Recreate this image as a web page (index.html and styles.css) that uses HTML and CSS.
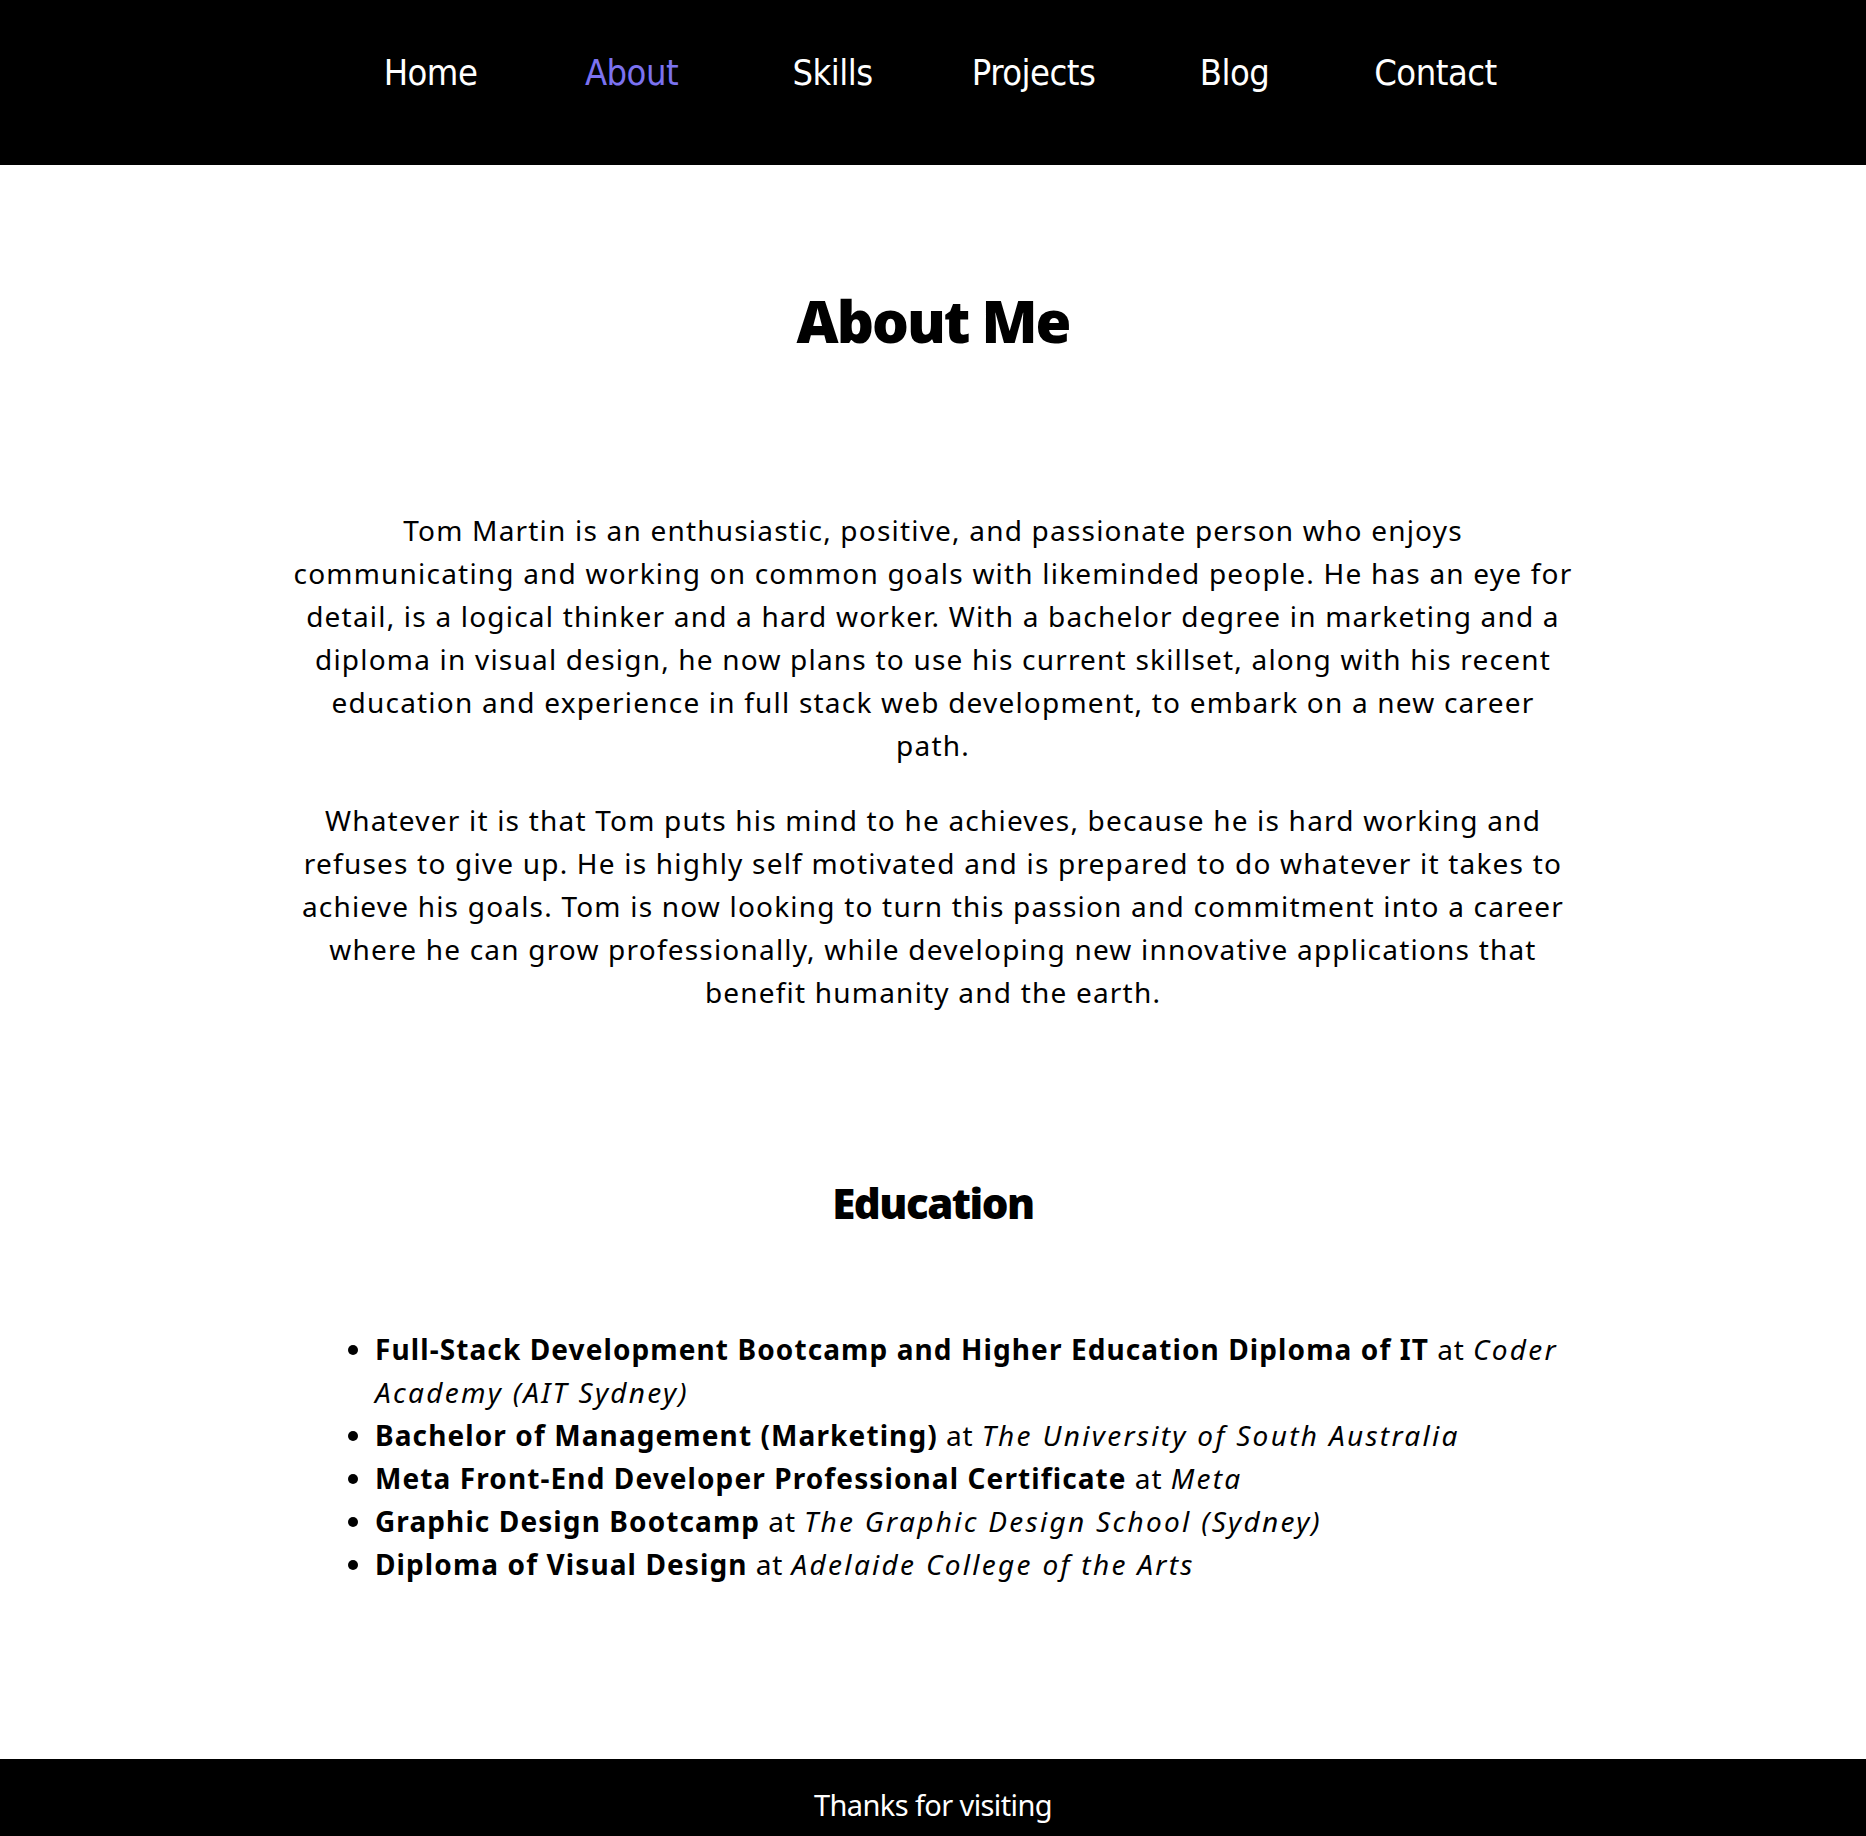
FILE: index.html
```html
<!DOCTYPE html>
<html lang="en">
<head>
<meta charset="utf-8">
<title>About Me</title>
<link rel="stylesheet" href="styles.css">
</head>
<body>
<header class="site-header">
  <nav class="nav">
    <a class="nav-link" href="#">Home</a>
    <a class="nav-link active" href="#">About</a>
    <a class="nav-link" href="#">Skills</a>
    <a class="nav-link" href="#">Projects</a>
    <a class="nav-link" href="#">Blog</a>
    <a class="nav-link" href="#">Contact</a>
  </nav>
</header>
<main class="main">
  <section class="about">
    <h1 class="title">About Me</h1>
    <div class="bio">
      <p>Tom Martin is an enthusiastic, positive, and passionate person who enjoys communicating and working on common goals with likeminded people. He has an eye for detail, is a logical thinker and a hard worker. With a bachelor degree in marketing and a diploma in visual design, he now plans to use his current skillset, along with his recent education and experience in full stack web development, to embark on a new career path.</p>
      <p>Whatever it is that Tom puts his mind to he achieves, because he is hard working and refuses to give up. He is highly self motivated and is prepared to do whatever it takes to achieve his goals. Tom is now looking to turn this passion and commitment into a career where he can grow professionally, while developing new innovative applications that benefit humanity and the earth.</p>
    </div>
  </section>
  <section class="education">
    <h2 class="subtitle">Education</h2>
    <ul class="edu-list">
      <li><strong>Full-Stack Development Bootcamp and Higher Education Diploma of IT</strong> at <em>Coder Academy (AIT Sydney)</em></li>
      <li><strong>Bachelor of Management (Marketing)</strong> at <em>The University of South Australia</em></li>
      <li><strong>Meta Front-End Developer Professional Certificate</strong> at <em>Meta</em></li>
      <li><strong>Graphic Design Bootcamp</strong> at <em>The Graphic Design School (Sydney)</em></li>
      <li><strong>Diploma of Visual Design</strong> at <em>Adelaide College of the Arts</em></li>
    </ul>
  </section>
</main>
<footer class="site-footer">
  <p class="footer-text">Thanks for visiting</p>
</footer>
</body>
</html>
```
FILE: styles.css
```css
* { box-sizing: border-box; }
html, body { margin: 0; padding: 0; }
body {
  background: #fff;
  color: #000;
  font-family: "Noto Sans", "Open Sans", sans-serif;
}
.site-header {
  background: #000;
  height: 165px;
  display: flex;
  align-items: center;
  justify-content: center;
}
.nav {
  display: flex;
  margin-top: -20px;
}
.nav-link {
  width: 201px;
  text-align: center;
  color: #fff;
  text-decoration: none;
  font-family: "DejaVu Sans Condensed", "DejaVu Sans", sans-serif;
  font-size: 36px;
  letter-spacing: -0.5px;
  line-height: 1;
}
.nav-link.active { color: #7b72f0; }

.main {
  padding-top: 121px;
  padding-bottom: 173px;
}
.title {
  margin: 0;
  text-align: center;
  font-family: "Open Sans", sans-serif;
  font-weight: 800;
  font-size: 58px;
  line-height: 70px;
  letter-spacing: -2px;
}
.bio {
  max-width: 1282px;
  margin: 153px auto 0;
  text-align: center;
  font-size: 28px;
  line-height: 43px;
  letter-spacing: 1.2px;
}
.bio p { margin: 0 0 32px; }
.bio p:last-child { margin-bottom: 0; }

.education { margin-top: 164px; }
.subtitle {
  margin: 0;
  text-align: center;
  font-family: "Open Sans", sans-serif;
  font-weight: 800;
  font-size: 42px;
  line-height: 50px;
  letter-spacing: -1.5px;
}
.edu-list {
  max-width: 1290px;
  margin: 100px auto 0;
  padding-left: 87px;
  padding-right: 0;
  font-size: 28px;
  line-height: 43px;
  letter-spacing: 0.9px;
}
.edu-list strong { font-weight: 700; letter-spacing: 1.1px; }
.edu-list em { letter-spacing: 2.3px; }

.site-footer {
  background: #000;
  color: #fff;
  text-align: center;
  padding: 29px 0 29px;
}
.footer-text {
  margin: 0;
  font-family: "Noto Sans", sans-serif;
  font-size: 29px;
  line-height: 34px;
  letter-spacing: -0.6px;
}
```
